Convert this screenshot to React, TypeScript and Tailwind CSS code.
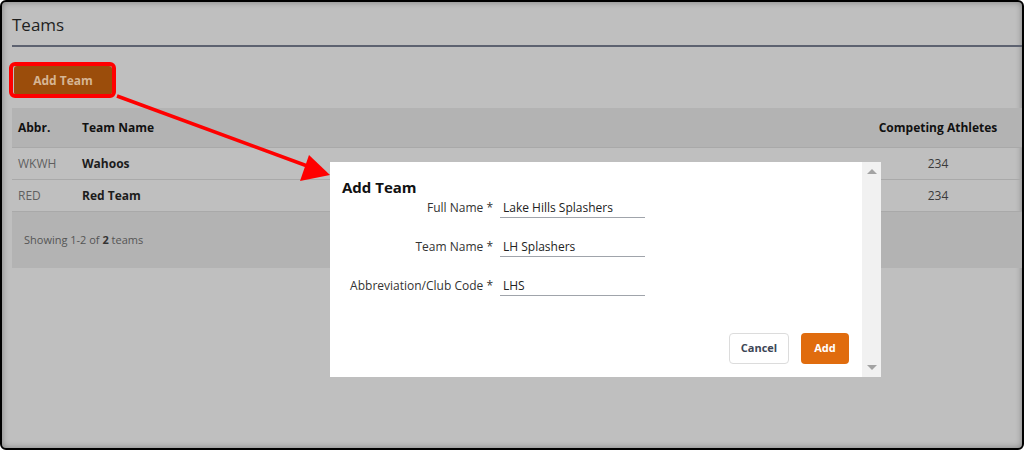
import React from 'react';

const font = { fontFamily: '"Open Sans", "Noto Sans", Arial, sans-serif' };

interface Team {
    abbr: string;
    name: string;
    athletes: number;
}

const teams: Team[] = [
    { abbr: 'WKWH', name: 'Wahoos', athletes: 234 },
    { abbr: 'RED', name: 'Red Team', athletes: 234 }
];

const fields = [
    { label: 'Full Name *', value: 'Lake Hills Splashers' },
    { label: 'Team Name *', value: 'LH Splashers' },
    { label: 'Abbreviation/Club Code *', value: 'LHS' }
];

const AddTeamModal: React.FC = () => (
    <div className="absolute left-[328px] top-[160px] flex h-[215px] w-[551px] bg-white">
        <div className="flex flex-1 flex-col pl-[12px] pr-[13px] pt-[15px] pb-[13px]">
            <h3 className="text-[15px] font-bold leading-[20px] text-[#111]">Add Team</h3>
            <div className="mt-px flex flex-col gap-[19px]">
                {fields.map((f) => (
                    <div key={f.label} className="grid grid-cols-[151px_145px] items-center gap-[7px]">
                        <label className="whitespace-nowrap text-right text-[12px] leading-[20px] text-[#333]">{f.label}</label>
                        <div className="h-[20px] border-b border-[#a0a4ab] pl-[3px] text-[12px] leading-[20px] text-[#222]">
                            {f.value}
                        </div>
                    </div>
                ))}
            </div>
            <div className="mt-auto flex justify-end gap-[12px]">
                <button
                    type="button"
                    className="h-[31px] w-[60px] rounded-[4px] border border-[#dcdcdc] bg-white text-[11px] font-bold text-[#3d4656]"
                >
                    Cancel
                </button>
                <button
                    type="button"
                    className="h-[31px] w-[48px] rounded-[4px] bg-[#e06c0e] text-[11px] font-bold text-white"
                >
                    Add
                </button>
            </div>
        </div>
        <div className="flex w-[19px] flex-col items-center justify-between bg-[#f1f1f1] py-[7px]">
            <span className="h-0 w-0 border-x-[5px] border-b-[5px] border-x-transparent border-b-[#a3a3a3]" />
            <span className="h-0 w-0 border-x-[5px] border-t-[5px] border-x-transparent border-t-[#a3a3a3]" />
        </div>
    </div>
);

const App: React.FC = () => {
    return (
        <div className="relative h-[450px] w-[1024px] overflow-hidden bg-white" style={font}>
            <div className="relative h-full overflow-hidden rounded-[6px] border-2 border-black bg-[#bfbfbf] shadow-[inset_0_0_6px_rgba(0,0,0,0.35)]">
                <div className="pl-[10px] pt-[11px]">
                    <h1 className="border-b-2 border-[#5d6270] pb-[8px] text-[17px] leading-[24px] text-[#1f1f1f]">Teams</h1>

                    <button
                        type="button"
                        className="ml-[2px] mt-[19px] h-[29px] w-[98px] rounded-[3px] bg-[#9b4d0b] text-[12px] font-bold text-[#d6b594]"
                    >
                        Add Team
                    </button>

                    <div className="mt-[13px] text-[12px]">
                        <div className="grid h-[39px] grid-cols-[64px_1fr_156px] items-center bg-[#b3b3b3] font-bold text-[#111]">
                            <div className="pl-[6px]">Abbr.</div>
                            <div className="pl-[6px]">Team Name</div>
                            <div className="pr-[12px] text-center">Competing Athletes</div>
                        </div>
                        {teams.map((t) => (
                            <div
                                key={t.abbr}
                                className="grid h-[32px] grid-cols-[64px_1fr_156px] items-center border-t border-[#a9a9a9]"
                            >
                                <div className="pl-[6px] text-[#5f5f5f]">{t.abbr}</div>
                                <div className="pl-[6px] font-bold text-[#1c1c1c]">{t.name}</div>
                                <div className="pr-[12px] text-center text-[#3a3a3a]">{t.athletes}</div>
                            </div>
                        ))}
                        <div className="flex h-[57px] items-center border-t border-[#a9a9a9] bg-[#b3b3b3] pl-[12px] text-[11px] text-[#555]">
                            Showing 1-2 of&nbsp;<b className="text-[#333]">2</b>&nbsp;teams
                        </div>
                    </div>
                </div>

                <AddTeamModal />
            </div>

            {/* annotation: highlight + arrow */}
            <div className="absolute left-[9px] top-[62px] h-[36px] w-[107px] rounded-[6px] border-[4px] border-[#ff0000]" />
            <svg className="pointer-events-none absolute inset-0" width="1024" height="450">
                <line x1="117" y1="96" x2="310" y2="167" stroke="#ff0000" strokeWidth="3.5" />
                <polygon points="330,175 300,181 309,155" fill="#ff0000" />
            </svg>
        </div>
    );
};

export default App;
